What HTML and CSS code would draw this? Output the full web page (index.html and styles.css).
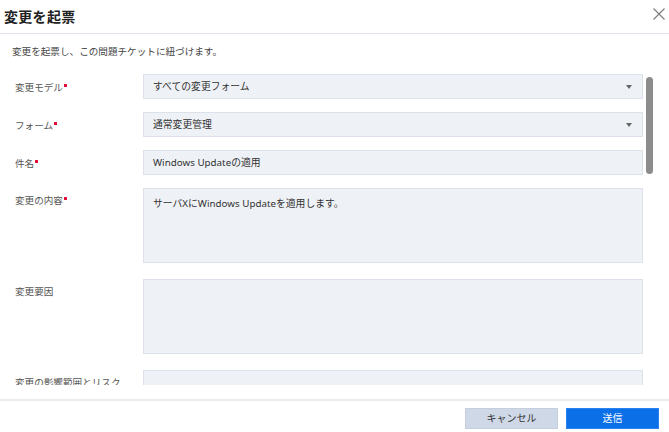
FILE: index.html
```html
<!DOCTYPE html>
<html lang="ja">
<head>
<meta charset="utf-8">
<link rel="stylesheet" href="styles.css">
</head>
<body>
<div class="dialog">
  <header class="head">
    <h1 class="title">変更を起票</h1>
    <svg class="close" width="12" height="12" viewBox="0 0 12 12"><path d="M0.5 0.5 L11.5 11.5 M11.5 0.5 L0.5 11.5" stroke="#7a7a7a" stroke-width="1.1" fill="none"/></svg>
  </header>
  <div class="body">
    <p class="desc">変更を起票し、この問題チケットに紐づけます。</p>
    <div class="row">
      <label class="lab">変更モデル<span class="req"></span></label>
      <div class="box select">すべての変更フォーム<span class="caret"></span></div>
    </div>
    <div class="row">
      <label class="lab">フォーム<span class="req"></span></label>
      <div class="box select">通常変更管理<span class="caret"></span></div>
    </div>
    <div class="row">
      <label class="lab">件名<span class="req"></span></label>
      <div class="box">Windows Updateの適用</div>
    </div>
    <div class="row tall">
      <label class="lab">変更の内容<span class="req"></span></label>
      <div class="box area">サーバXにWindows Updateを適用します。</div>
    </div>
    <div class="row tall">
      <label class="lab">変更要因</label>
      <div class="box area"></div>
    </div>
    <div class="row tall">
      <label class="lab">変更の影響範囲とリスク</label>
      <div class="box area"></div>
    </div>
    <div class="thumb"></div>
  </div>
  <footer class="foot">
    <button class="btn cancel">キャンセル</button>
    <button class="btn send">送信</button>
  </footer>
</div>
</body>
</html>
```

FILE: styles.css
```css
* { box-sizing: border-box; }
html, body { margin: 0; padding: 0; background: #fff; }
body {
  font-family: "Noto Sans", "Noto Sans CJK JP", sans-serif;
  color: #333;
  width: 669px;
  height: 432px;
  overflow: hidden;
}
.dialog {
  display: flex;
  flex-direction: column;
  height: 432px;
}
.head {
  height: 34px;
  border-bottom: 1px solid #dfe3ea;
  display: flex;
  align-items: center;
  justify-content: space-between;
  padding: 0 4px 1px 4px;
}
.title {
  margin: 0;
  font-size: 14px;
  font-weight: 700;
  color: #222;
  letter-spacing: 0.3px;
}
.close { margin-top: -4px; }
.body {
  position: relative;
  height: 351px;
  overflow: hidden;
  padding: 11px 0 0 12px;
}
.desc {
  margin: 0 0 15px 0;
  font-size: 9.6px;
  line-height: 14px;
  color: #444;
}
.row {
  display: flex;
  align-items: center;
  margin-bottom: 13px;
}
.row.tall { align-items: flex-start; margin-bottom: 16px; }
.lab {
  width: 131px;
  padding-left: 3px;
  font-size: 9.6px;
  color: #555;
  flex: none;
}
.row.tall .lab { padding-top: 5px; }
.req {
  display: inline-block;
  width: 3px;
  height: 3px;
  background: #e0103a;
  margin-left: 1px;
  vertical-align: 4px;
}
.box {
  width: 500px;
  height: 25px;
  background: #eef1f6;
  border: 1px solid #dde2ea;
  font-size: 9.8px;
  line-height: 23px;
  padding: 0 9px;
  color: #333;
  position: relative;
}
.box.area {
  height: 75px;
  line-height: 16px;
  padding-top: 7px;
}
.caret {
  position: absolute;
  right: 10px;
  top: 10px;
  width: 0;
  height: 0;
  border-left: 3.5px solid transparent;
  border-right: 3.5px solid transparent;
  border-top: 4px solid #666;
}
.thumb {
  position: absolute;
  left: 646px;
  top: 43px;
  width: 7px;
  height: 97px;
  border-radius: 4px;
  background: #8c8c8c;
}
.foot {
  margin-top: 14px;
  border-top: 2px solid #e8ebf0;
  flex: 1;
  display: flex;
  justify-content: flex-end;
  align-items: flex-start;
  gap: 8px;
  padding: 7px 10px 0 0;
}
.btn {
  width: 93px;
  height: 21px;
  font-family: "Noto Sans", "Noto Sans CJK JP", sans-serif;
  font-size: 10px;
  border: 1px solid transparent;
  padding: 0;
  line-height: 19px;
}
.cancel { background: #cfd8e6; color: #333; border-color: #c4cedd; }
.send { background: #0b6fe8; color: #fff; border-color: #2a82ee; }
```
